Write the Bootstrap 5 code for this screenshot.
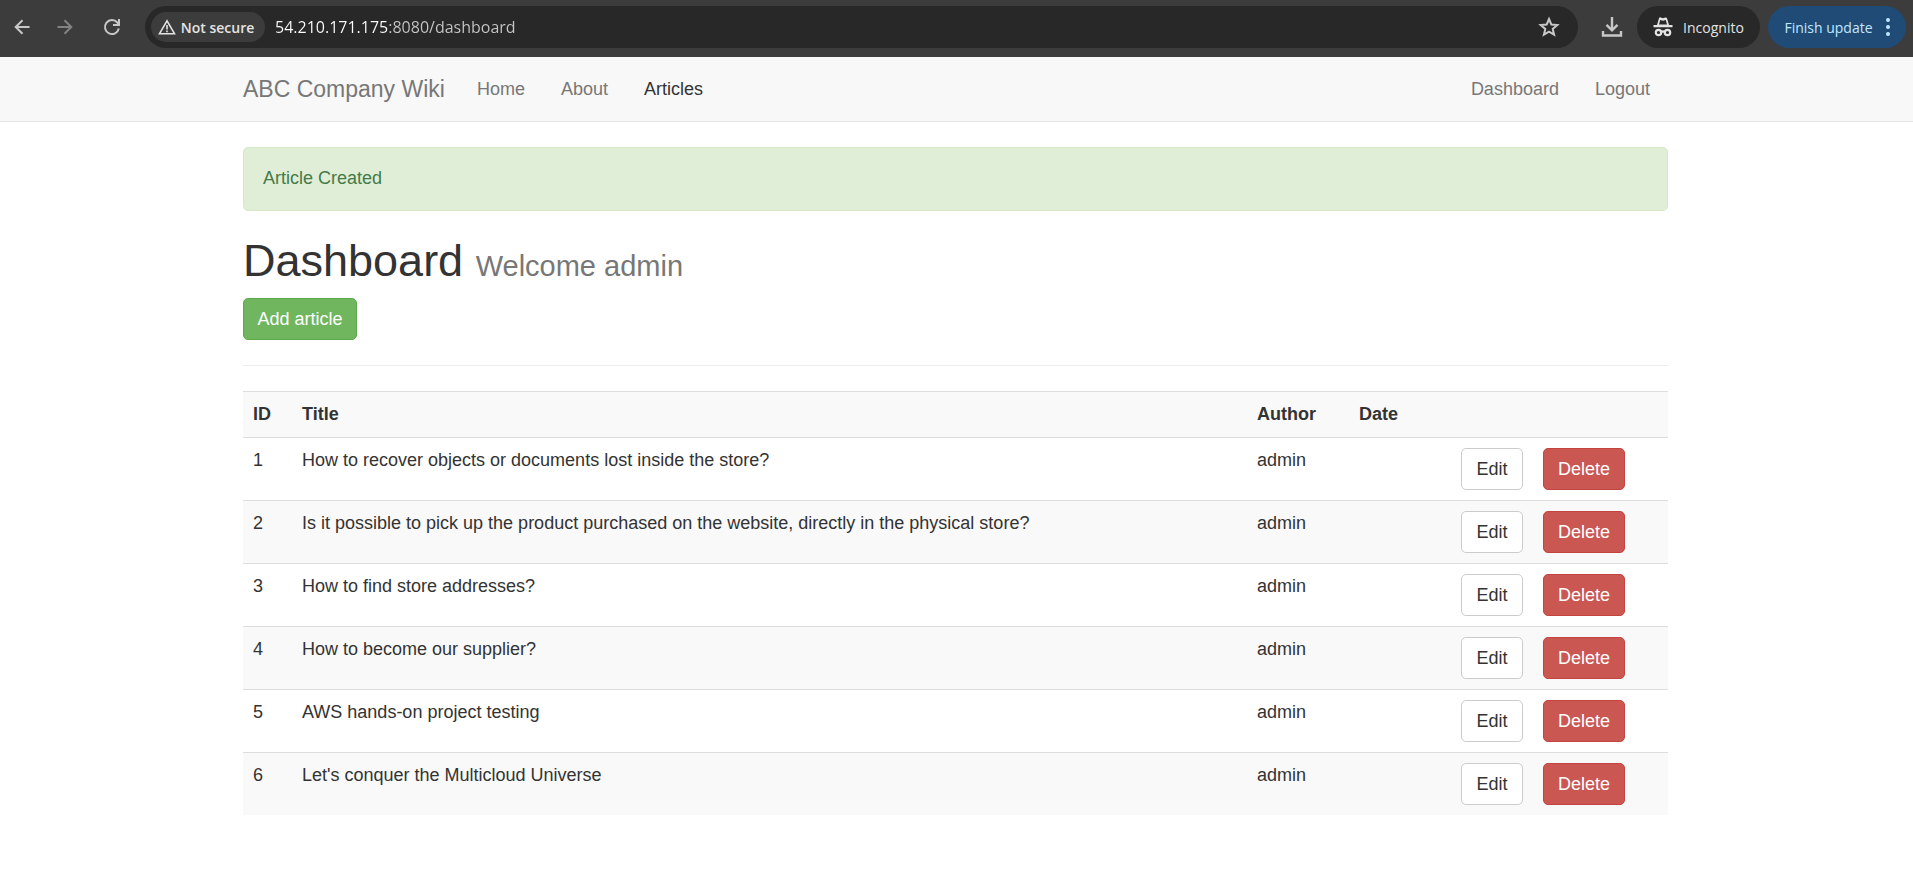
<!DOCTYPE html>
<html lang="en">
<head>
<meta charset="utf-8">
<meta name="viewport" content="width=device-width, initial-scale=1">
<title>ABC Company Wiki</title>
<link href="https://cdn.jsdelivr.net/npm/bootstrap@5.3.0/dist/css/bootstrap.min.css" rel="stylesheet">
<style>
body { font: 18px/25px "Liberation Sans", Arial, sans-serif; color: #333; background: #fff; }
.wiki-width { max-width: 1467px; padding-inline: 20px 22px; }

/* browser toolbar */
.browser-bar { background: #3c3c3c; color: #c7c7c7; height: 57px; padding: 0 7px 3px 4px; font-family: "Open Sans", "Noto Sans", sans-serif; }
.browser-bar button { border: 0; background: none; color: inherit; padding: 0; display: flex; align-items: center; justify-content: center; }
.tool-btn { width: 35px; height: 42px; flex: none; }
.tool-btn:disabled { opacity: .5; }
.address { background: #282828; border-radius: 21px; height: 42px; padding: 0 18px 0 6px; }
.browser-bar .site-chip { background: #3c3c3c; color: #e3e3e3; border-radius: 15px; height: 30px; width: 114px; padding-right: 4px; gap: 5px; font-size: 14px; font-weight: 600; white-space: nowrap; flex: none; }
.address input { border: 0; outline: 0; font-size: 16px; line-height: 24px; padding: 0; margin-left: 10px; min-width: 0; color: transparent; background: linear-gradient(90deg, #fff 114px, #c7c7c7 114px); -webkit-background-clip: text; background-clip: text; }
.browser-bar .pill { height: 42px; border-radius: 21px; font-size: 14px; white-space: nowrap; flex: none; }
.browser-bar .pill-dark { background: #282828; color: #e3e3e3; width: 123px; gap: 10px; }
.browser-bar .pill-blue { background: #204b77; color: #c2e7ff; width: 138px; gap: 13px; }

/* site navigation */
.site-nav { background: #f8f8f8; border-bottom: 1px solid #e7e7e7; padding: 0; min-height: 65px; }
.site-nav .navbar-brand { color: #777; font-size: 23px; line-height: 25px; padding: 0; margin-right: 14px; }
.site-nav .navbar-nav .nav-link { color: #777; font-size: 18px; padding: 20px 18px; line-height: 24px; }
.site-nav .navbar-nav .nav-link.active { color: #333; }

.alert-created { background: #e0eed8; border: 1px solid #d6e9c6; color: #447a48; border-radius: 5px; padding: 18px 19px 20px; margin: 25px 0; line-height: 24px; }
.page-title { font-size: 45px; line-height: 50px; font-weight: 400; margin: 0 0 7px; }
.page-title .subtitle { font-size: 29px; color: #777; }
.btn { font-size: 18px; line-height: 24px; padding: 8px 0; border-radius: 5px; }
.btn-add { width: 114px; }
.btn-edit { width: 62px; }
.btn-del { width: 82px; }
.btn-success { --bs-btn-bg: #70b65f; --bs-btn-border-color: #5ca94b; }
.btn-danger { --bs-btn-bg: #ca5751; --bs-btn-border-color: #c4453f; }
.btn-edit { --bs-btn-bg: #fff; --bs-btn-border-color: #ccc; --bs-btn-color: #333; }
.divider { border-top: 1px solid #eee; opacity: 1; margin: 25px 0; }

.article-table { table-layout: fixed; margin: 0; --bs-table-color: #333; --bs-table-striped-color: #333; --bs-table-striped-bg: #f9f9f9; border-color: #ddd; }
.article-table > tbody > tr > * { padding: 10px; border-width: 1px 0 0; vertical-align: top; }
.c-id { width: 49px; }
.c-info { width: 102px; }
.c-edit { width: 82px; }
.c-del { width: 135px; }
</style>
</head>
<body>
<header class="browser-bar d-flex align-items-center">
  <button class="tool-btn" type="button" aria-label="Back"><svg width="16" height="16" viewBox="0 0 16 16" fill="none" stroke="currentColor" stroke-width="2"><path d="M15.500 8H2M8.500 1.200 1.700 8l6.800 6.800"/></svg></button>
  <button class="tool-btn ms-2 me-2" type="button" aria-label="Forward" disabled><svg width="16" height="16" viewBox="0 0 16 16" fill="none" stroke="currentColor" stroke-width="2"><path d="M.5 8H14M7.500 1.200 14.300 8l-6.800 6.800"/></svg></button>
  <button class="tool-btn ms-1 me-3" type="button" aria-label="Reload"><svg width="18" height="18" viewBox="0 0 18 18" fill="none" stroke="currentColor" stroke-width="2"><path d="M15.800 10.500A7 7 0 1 1 14.300 4.500L16 6.300M16 1v6h-6"/></svg></button>
  <form class="address d-flex align-items-center flex-grow-1 me-3">
    <button class="site-chip" type="button"><svg width="18" height="16" viewBox="0 0 18 16" fill="none" stroke="currentColor" stroke-width="1.600"><path d="M9 1.800 1.500 14.700h15zM9 6v4.500M9 11.500v1.700"/></svg>Not secure</button>
    <input class="flex-grow-1" type="text" aria-label="Address" value="54.210.171.175:8080/dashboard">
    <button type="button" aria-label="Bookmark"><svg width="22" height="22" viewBox="0 0 22 22" fill="none" stroke="currentColor" stroke-width="2"><path d="m11 3 2.300 5.500 6 .5-4.600 3.900 1.400 5.800L11 15.600l-5.100 3.100 1.400-5.800L2.700 9l6-.5z"/></svg></button>
  </form>
  <button class="tool-btn me-2" type="button" aria-label="Downloads"><svg width="22" height="22" viewBox="0 0 22 22" fill="none" stroke="currentColor" stroke-width="2.400"><path d="M11 1v13M5.500 8.800l5.500 5.500 5.500-5.500M2 15v4.500h18V15"/></svg></button>
  <button class="pill pill-dark me-2" type="button"><svg width="20" height="20" viewBox="0 0 20 20" fill="currentColor"><path d="M6 1.200c.3-.8 1-1 1.700-.7l2.300.7 2.300-.7c.7-.3 1.400 0 1.700.7l2 6.800h3.500v2.200H.5V8H4z"/><path d="M7.200 3 6 7.500h8L12.800 3 10 3.800z" fill="#282828"/><g fill="none" stroke="currentColor" stroke-width="2.200"><circle cx="5.500" cy="15.500" r="2.700"/><circle cx="14.500" cy="15.500" r="2.700"/><path d="M8 15q2-1.200 4 0"/></g></svg>Incognito</button>
  <button class="pill pill-blue" type="button">Finish update<svg width="4" height="20" viewBox="0 0 4 20" fill="currentColor"><circle cx="2" cy="3" r="2"/><circle cx="2" cy="10" r="2"/><circle cx="2" cy="17" r="2"/></svg></button>
</header>

<nav class="navbar navbar-expand site-nav">
  <div class="container wiki-width">
    <a class="navbar-brand" href="#">ABC Company Wiki</a>
    <ul class="navbar-nav me-auto">
      <li class="nav-item"><a class="nav-link" href="#">Home</a></li>
      <li class="nav-item"><a class="nav-link" href="#">About</a></li>
      <li class="nav-item"><a class="nav-link active" href="#">Articles</a></li>
    </ul>
    <ul class="navbar-nav">
      <li class="nav-item"><a class="nav-link" href="#">Dashboard</a></li>
      <li class="nav-item"><a class="nav-link" href="#">Logout</a></li>
    </ul>
  </div>
</nav>

<main class="container wiki-width">
  <div class="alert alert-created" role="alert">Article Created</div>
  <h1 class="page-title">Dashboard <span class="subtitle">Welcome admin</span></h1>
  <a class="btn btn-success btn-add" href="#">Add article</a>
  <hr class="divider">
  <table class="table table-striped article-table">
    <colgroup><col class="c-id"><col><col class="c-info"><col class="c-info"><col class="c-edit"><col class="c-del"></colgroup>
    <tbody>
      <tr><th scope="col">ID</th><th scope="col">Title</th><th scope="col">Author</th><th scope="col">Date</th><th></th><th></th></tr>
      <tr><td>1</td><td>How to recover objects or documents lost inside the store?</td><td>admin</td><td></td><td><a class="btn btn-edit" href="#">Edit</a></td><td><button class="btn btn-danger btn-del" type="button">Delete</button></td></tr>
      <tr><td>2</td><td>Is it possible to pick up the product purchased on the website, directly in the physical store?</td><td>admin</td><td></td><td><a class="btn btn-edit" href="#">Edit</a></td><td><button class="btn btn-danger btn-del" type="button">Delete</button></td></tr>
      <tr><td>3</td><td>How to find store addresses?</td><td>admin</td><td></td><td><a class="btn btn-edit" href="#">Edit</a></td><td><button class="btn btn-danger btn-del" type="button">Delete</button></td></tr>
      <tr><td>4</td><td>How to become our supplier?</td><td>admin</td><td></td><td><a class="btn btn-edit" href="#">Edit</a></td><td><button class="btn btn-danger btn-del" type="button">Delete</button></td></tr>
      <tr><td>5</td><td>AWS hands-on project testing</td><td>admin</td><td></td><td><a class="btn btn-edit" href="#">Edit</a></td><td><button class="btn btn-danger btn-del" type="button">Delete</button></td></tr>
      <tr><td>6</td><td>Let's conquer the Multicloud Universe</td><td>admin</td><td></td><td><a class="btn btn-edit" href="#">Edit</a></td><td><button class="btn btn-danger btn-del" type="button">Delete</button></td></tr>
    </tbody>
  </table>
</main>
<script src="https://cdn.jsdelivr.net/npm/bootstrap@5.3.0/dist/js/bootstrap.bundle.min.js"></script>
</body>
</html>
